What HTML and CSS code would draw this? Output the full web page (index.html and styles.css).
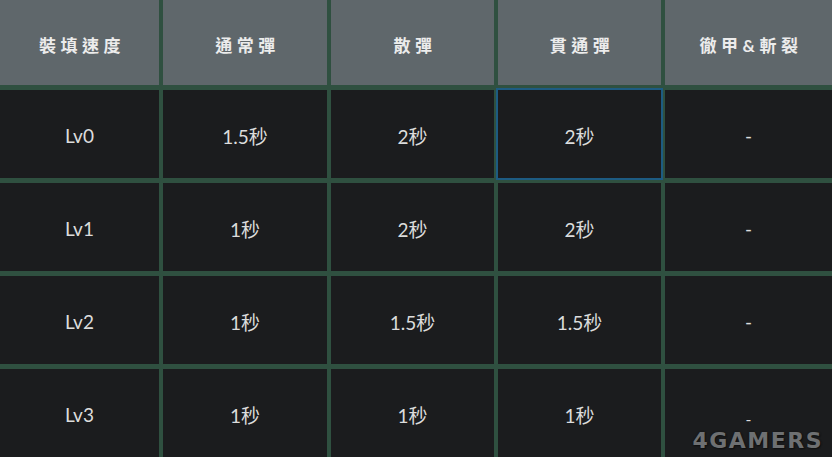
FILE: index.html
```html
<!DOCTYPE html>
<html lang="zh-Hant">
<head>
	<meta charset="UTF-8">
	<title>裝填速度</title>
	<link rel="stylesheet" href="styles.css">
</head>
<body>
	<div class="sheet">
		<div class="cell head">裝填速度</div>
		<div class="cell head">通常彈</div>
		<div class="cell head">散彈</div>
		<div class="cell head">貫通彈</div>
		<div class="cell head">徹甲&amp;斬裂</div>

		<div class="cell">Lv0</div>
		<div class="cell">1.5秒</div>
		<div class="cell">2秒</div>
		<div class="cell active">2秒</div>
		<div class="cell">-</div>

		<div class="cell">Lv1</div>
		<div class="cell">1秒</div>
		<div class="cell">2秒</div>
		<div class="cell">2秒</div>
		<div class="cell">-</div>

		<div class="cell">Lv2</div>
		<div class="cell">1秒</div>
		<div class="cell">1.5秒</div>
		<div class="cell">1.5秒</div>
		<div class="cell">-</div>

		<div class="cell">Lv3</div>
		<div class="cell">1秒</div>
		<div class="cell">1秒</div>
		<div class="cell">1秒</div>
		<div class="cell low">-</div>
	</div>
	<div class="mark">4GAMERS</div>
</body>
</html>
```

FILE: styles.css
```css
html,body{margin:0;padding:0;}
body{width:832px;height:457px;overflow:hidden;background:#2f5040;position:relative;font-family:Lato,"Noto Sans CJK TC",sans-serif;}
.sheet{display:grid;grid-template-columns:159px 164px 163px 163px 1fr;grid-template-rows:85px repeat(4,88px);column-gap:4px;row-gap:5px;background:#2f5040;}
.cell{background:#1b1c1e;color:#dcdcdc;font-size:19px;display:flex;align-items:center;justify-content:center;padding-top:2px;}
.head{background:#5f676b;color:#ececec;font-weight:bold;font-size:17px;letter-spacing:4.5px;padding-left:5px;padding-top:3px;}
.active{box-shadow:0 0 0 2px #1d5b82;position:relative;}
.low{padding-top:10px;font-size:16px;}
.mark{position:absolute;right:9px;bottom:5px;font-family:"DejaVu Sans",sans-serif;font-weight:bold;font-size:22px;letter-spacing:1.5px;color:#6e7072;text-shadow:0 0 2px #111,1px 1px 1px #111;line-height:1;}
```
